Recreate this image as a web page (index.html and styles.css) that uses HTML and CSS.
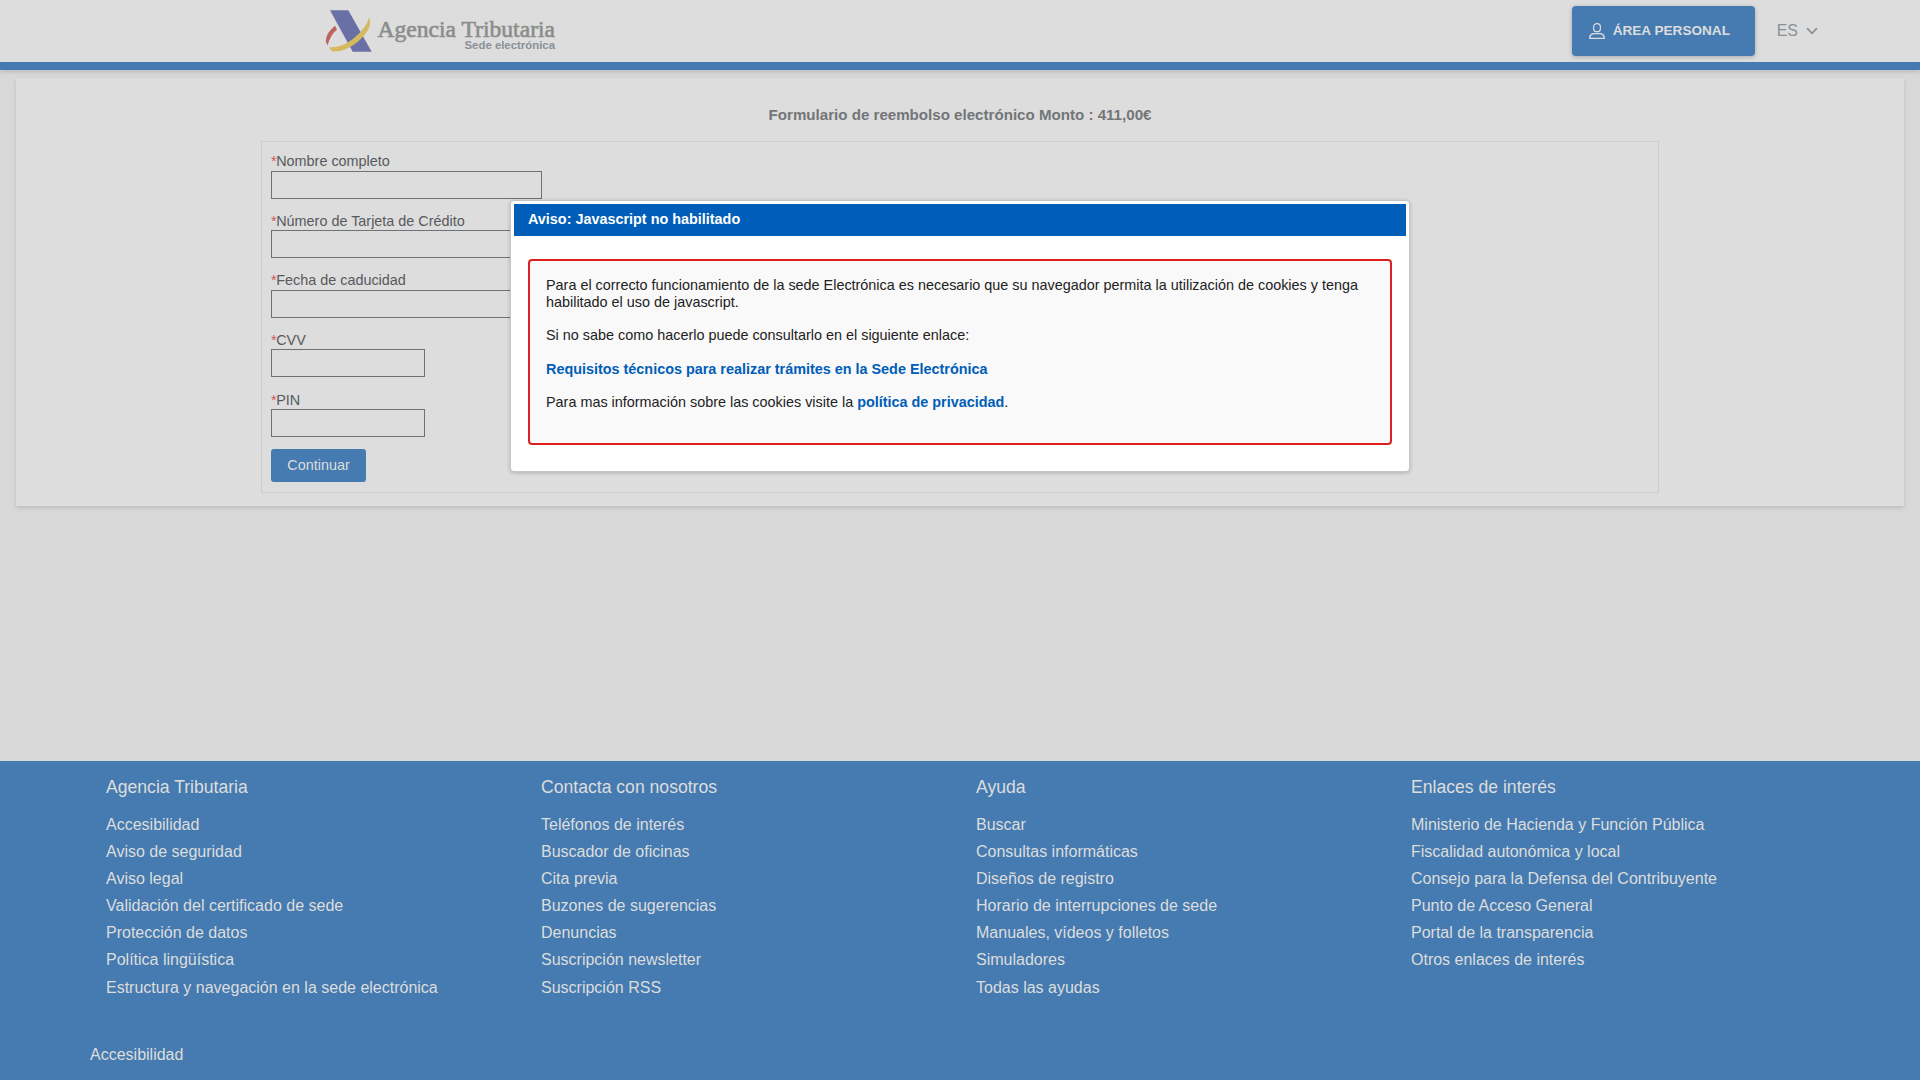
FILE: index.html
```html
<!DOCTYPE html>
<html lang="es">
<head>
<meta charset="utf-8">
<title>Agencia Tributaria</title>
<link rel="stylesheet" href="styles.css">
</head>
<body>
<header class="header">
  <svg class="logo" width="234" height="50" viewBox="0 0 234 50" role="img" aria-label="Agencia Tributaria">
    <path d="M10 19.700Q1.500 26.500 .8 34Q.8 38 2.700 39.300Q5 29.500 12 23.500Z" fill="#bd645f"/>
    <path d="M5 4.300H23.300L46.700 45.700H27.700Z" fill="#6970a6"/>
    <path d="M44 11.300Q42.500 21 28.500 32.500Q17 42 4.300 41.300Q5.500 45 7.700 45.500Q19 46.500 32 36.500Q49 22 44 11.300Z" fill="#d5b95f"/>
    <text class="logo-name" x="52.500" y="30.500" textLength="177.500" lengthAdjust="spacingAndGlyphs">Agencia Tributaria</text>
    <text class="logo-sub" x="139.500" y="42.800" textLength="90.500" lengthAdjust="spacingAndGlyphs">Sede electrónica</text>
  </svg>
  <div class="actions">
    <a class="personal">
      <svg width="16" height="16" viewBox="0 0 16 16" fill="none" stroke="#ddd" stroke-width="1.300"><rect x="4.600" y="0.700" width="6.800" height="8" rx="3.300"/><path d="M.8 15.300V14Q1.500 11 5 10.700H11Q14.500 11 15.200 14V15.300Z"/></svg>
      <span>ÁREA PERSONAL</span>
    </a>
    <a class="lang"><span>ES</span><svg width="12" height="8" viewBox="0 0 12 8" fill="none" stroke="#8a9096" stroke-width="1.700"><path d="M1 1.200L6 6.300L11 1.200"/></svg></a>
  </div>
</header>
<main class="card">
  <h1 class="title">Formulario de reembolso electrónico Monto : 411,00€</h1>
  <form class="form">
    <div class="field"><label><i>*</i>Nombre completo</label><input type="text"></div>
    <div class="field"><label><i>*</i>Número de Tarjeta de Crédito</label><input type="text"></div>
    <div class="field"><label><i>*</i>Fecha de caducidad</label><input type="text"></div>
    <div class="field"><label><i>*</i>CVV</label><input class="short" type="text"></div>
    <div class="field"><label><i>*</i>PIN</label><input class="short" type="text"></div>
    <button class="submit" type="button">Continuar</button>
  </form>
</main>
<footer class="footer">
  <div class="columns">
    <section><h2>Agencia Tributaria</h2><ul><li>Accesibilidad</li><li>Aviso de seguridad</li><li>Aviso legal</li><li>Validación del certificado de sede</li><li>Protección de datos</li><li>Política lingüística</li><li>Estructura y navegación en la sede electrónica</li></ul></section>
    <section><h2>Contacta con nosotros</h2><ul><li>Teléfonos de interés</li><li>Buscador de oficinas</li><li>Cita previa</li><li>Buzones de sugerencias</li><li>Denuncias</li><li>Suscripción newsletter</li><li>Suscripción RSS</li></ul></section>
    <section><h2>Ayuda</h2><ul><li>Buscar</li><li>Consultas informáticas</li><li>Diseños de registro</li><li>Horario de interrupciones de sede</li><li>Manuales, vídeos y folletos</li><li>Simuladores</li><li>Todas las ayudas</li></ul></section>
    <section><h2>Enlaces de interés</h2><ul><li>Ministerio de Hacienda y Función Pública</li><li>Fiscalidad autonómica y local</li><li>Consejo para la Defensa del Contribuyente</li><li>Punto de Acceso General</li><li>Portal de la transparencia</li><li>Otros enlaces de interés</li></ul></section>
  </div>
  <p class="bottom">Accesibilidad</p>
</footer>
<div class="dialog" role="dialog">
  <div class="dialog-title">Aviso: Javascript no habilitado</div>
  <div class="notice">
    <p>Para el correcto funcionamiento de la sede Electrónica es necesario que su navegador permita la utilización de cookies y tenga habilitado el uso de javascript.</p>
    <p>Si no sabe como hacerlo puede consultarlo en el siguiente enlace:</p>
    <p><a>Requisitos técnicos para realizar trámites en la Sede Electrónica</a></p>
    <p>Para mas información sobre las cookies visite la <a>política de privacidad</a>.</p>
  </div>
</div>
</body>
</html>
```
FILE: styles.css
```css
* { box-sizing: border-box; }
body {
  margin: 0;
  height: 1080px;
  overflow: hidden;
  display: flex;
  flex-direction: column;
  background: #d8d8d8;
  font-family: "Liberation Sans", Arial, sans-serif;
  font-size: 14.4px;
  color: #57595c;
}
.header {
  flex: none;
  height: 70px;
  padding: 6px 102px 0 325px;
  border-bottom: 8px solid #457bb0;
  background: #ddd;
  box-shadow: 0 2px 4px rgba(0, 0, 0, .12);
  display: flex;
  justify-content: space-between;
  align-items: flex-start;
}
.logo { overflow: visible; }
.logo-name { font: 22.500px "Liberation Serif", serif; fill: #8b8d8c; stroke: #8b8d8c; stroke-width: .6px; }
.logo-sub { font: bold 11.300px "Liberation Sans", sans-serif; fill: #8a9096; }
.actions { display: flex; gap: 22px; }
.personal {
  width: 183px;
  height: 50px;
  padding-left: 17px;
  display: flex;
  align-items: center;
  gap: 8px;
  background: #457bb0;
  color: #ddd;
  border-radius: 4px;
  font-weight: bold;
  font-size: 13.600px;
  box-shadow: 0 1px 4px rgba(0, 0, 0, .25);
}
.personal span { padding-bottom: 1px; }
.lang { height: 50px; display: flex; align-items: center; gap: 8px; font-size: 16px; color: #8a9096; }
.card {
  flex: none;
  height: 428px;
  margin: 8px 16px 0;
  padding: 28px 245px 0;
  background: #ddd;
  box-shadow: 0 2px 4px rgba(0, 0, 0, .12);
}
.title { margin: 0; height: 35px; line-height: 18px; font-size: 15.120px; text-align: center; color: #737578; }
.form { height: 352px; border: 1px solid #cacdd0; padding: 10.150px 9px 0; }
.field { height: 59.600px; }
.field label { display: block; height: 18.450px; line-height: 19px; }
.field i { margin-right: -.4px; color: #d2575a; font-style: normal; }
.field input { display: block; width: 271px; height: 28px; border: 1px solid #6d7277; background: transparent; padding: 0; }
.field .short { width: 154px; }
.submit { display: block; width: 95px; height: 33px; margin-top: -1.150px; border: 0; border-radius: 3px; background: #457bb0; color: #ddd; font: inherit; }
.footer { flex: none; margin-top: auto; height: 319px; padding: 16px 74px 0 106px; background: #457bb0; color: #ddd; font-size: 16px; }
.columns { height: 268px; display: grid; grid-template-columns: repeat(4, 435px); }
.footer h2 { margin: 0 0 13.950px; font-size: 17.600px; font-weight: normal; line-height: 20px; }
.footer ul { list-style: none; margin: 0; padding: 0; }
.footer li { height: 27.100px; line-height: 27px; white-space: nowrap; }
.bottom { margin: 0 0 0 -16px; line-height: 20px; }
.dialog {
  position: absolute;
  left: 510px;
  top: 200px;
  width: 900px;
  height: 272px;
  padding: 3px;
  border: 1px solid #c5c5c5;
  border-radius: 4px;
  background: #fff;
  box-shadow: 0 1px 4px rgba(0, 0, 0, .2);
  color: #222;
}
.dialog-title { height: 32px; line-height: 30px; padding-left: 14px; background: #005eb8; color: #fff; font-weight: bold; }
.notice { margin: 23px 14px 0; height: 186px; padding: 16px; border: 2px solid #df2020; border-radius: 4px; background: #f9f9f9; }
.notice p { margin: 0 0 16.700px; line-height: 16.800px; }
.notice a { color: #005eb8; font-weight: bold; }
```
